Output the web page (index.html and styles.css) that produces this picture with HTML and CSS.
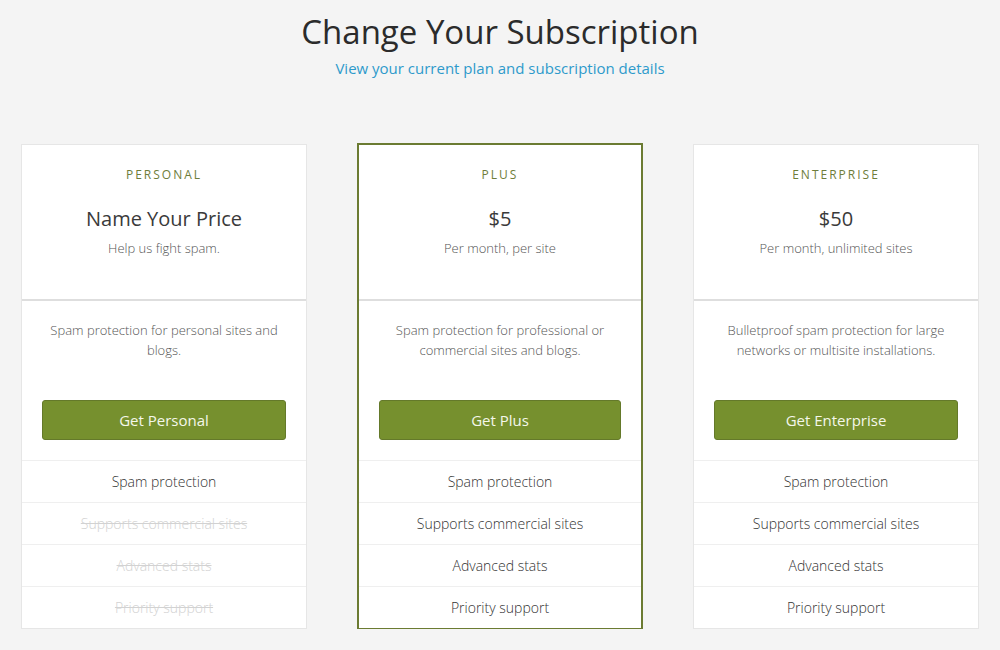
FILE: index.html
```html
<!DOCTYPE html>
<html lang="en">
<head>
  <meta charset="UTF-8">
  <meta name="viewport" content="width=device-width, initial-scale=1.0">
  <title>Change Your Subscription</title>
  <link rel="stylesheet" href="styles.css">
</head>
<body>
  <header class="page-head">
    <h1>Change Your Subscription</h1>
    <a class="sub-link" href="#">View your current plan and subscription details</a>
  </header>

  <main class="plans">
    <div class="plan">
      <div class="plan-top">
        <div class="plan-name">PERSONAL</div>
        <div class="plan-price">Name Your Price</div>
        <div class="plan-note">Help us fight spam.</div>
      </div>
      <div class="plan-desc">
        <p>Spam protection for personal sites and blogs.</p>
        <button class="plan-btn">Get Personal</button>
      </div>
      <ul class="features">
        <li>Spam protection</li>
        <li class="off">Supports commercial sites</li>
        <li class="off">Advanced stats</li>
        <li class="off">Priority support</li>
      </ul>
    </div>

    <div class="plan current">
      <div class="plan-top">
        <div class="plan-name">PLUS</div>
        <div class="plan-price">$5</div>
        <div class="plan-note">Per month, per site</div>
      </div>
      <div class="plan-desc">
        <p>Spam protection for professional or commercial sites and blogs.</p>
        <button class="plan-btn">Get Plus</button>
      </div>
      <ul class="features">
        <li>Spam protection</li>
        <li>Supports commercial sites</li>
        <li>Advanced stats</li>
        <li>Priority support</li>
      </ul>
    </div>

    <div class="plan">
      <div class="plan-top">
        <div class="plan-name">ENTERPRISE</div>
        <div class="plan-price">$50</div>
        <div class="plan-note">Per month, unlimited sites</div>
      </div>
      <div class="plan-desc">
        <p>Bulletproof spam protection for large networks or multisite installations.</p>
        <button class="plan-btn">Get Enterprise</button>
      </div>
      <ul class="features">
        <li>Spam protection</li>
        <li>Supports commercial sites</li>
        <li>Advanced stats</li>
        <li>Priority support</li>
      </ul>
    </div>
  </main>
</body>
</html>
```

FILE: styles.css
```css
body {
  font-family: "Open Sans", Arial, sans-serif;
  margin: 0;
  padding: 0;
  background-color: #f4f4f4;
  color: #333;
}
.page-head {
  text-align: center;
  padding-top: 10px;
}
.page-head h1 {
  margin: 0;
  font-size: 33px;
  font-weight: 400;
  line-height: 44px;
  color: #2b2b2b;
}
.sub-link {
  display: block;
  margin-top: 3px;
  font-size: 15px;
  line-height: 22px;
  color: #2e9acb;
  text-decoration: none;
}
.plans {
  display: grid;
  grid-template-columns: repeat(3, 1fr);
  gap: 50px;
  width: 958px;
  margin: 65px 0 0 21px;
}
.plan {
  background-color: #fff;
  border: 1px solid #e6e6e6;
  display: flex;
  flex-direction: column;
}
.plan.current {
  border: 2px solid #6b7b32;
  margin-top: -1px;
  margin-bottom: -1px;
}
.plan-top {
  text-align: center;
  height: 156px;
  border-bottom: 2px solid #dedede;
  box-sizing: border-box;
  padding-top: 21px;
}
.plan-name {
  font-size: 12px;
  letter-spacing: 2px;
  color: #6e7d3a;
  line-height: 18px;
}
.plan-price {
  margin-top: 22px;
  font-size: 20px;
  line-height: 26px;
  color: #3a3a3a;
}
.plan-note {
  margin-top: 7px;
  font-size: 13px;
  font-weight: 300;
  color: #555;
  line-height: 18px;
}
.plan-desc {
  padding: 19px 20px 20px;
  text-align: center;
  border-bottom: 1px solid #efefef;
}
.plan-desc p {
  margin: 0;
  height: 80px;
  font-size: 13px;
  font-weight: 300;
  line-height: 20px;
  color: #555;
}
.plan-btn {
  display: block;
  width: 100%;
  height: 40px;
  background-color: #76902e;
  border: 1px solid #64792a;
  border-radius: 3px;
  color: #f4f7ea;
  font-family: "Open Sans", Arial, sans-serif;
  font-size: 15px;
}
.features {
  list-style: none;
  margin: 0;
  padding: 0;
}
.features li {
  height: 41px;
  line-height: 41px;
  text-align: center;
  font-size: 14px;
  font-weight: 300;
  color: #333;
  border-bottom: 1px solid #efefef;
}
.features li:last-child {
  border-bottom: none;
}
.features li.off {
  color: #d2d2d2;
  text-decoration: line-through;
}
```
